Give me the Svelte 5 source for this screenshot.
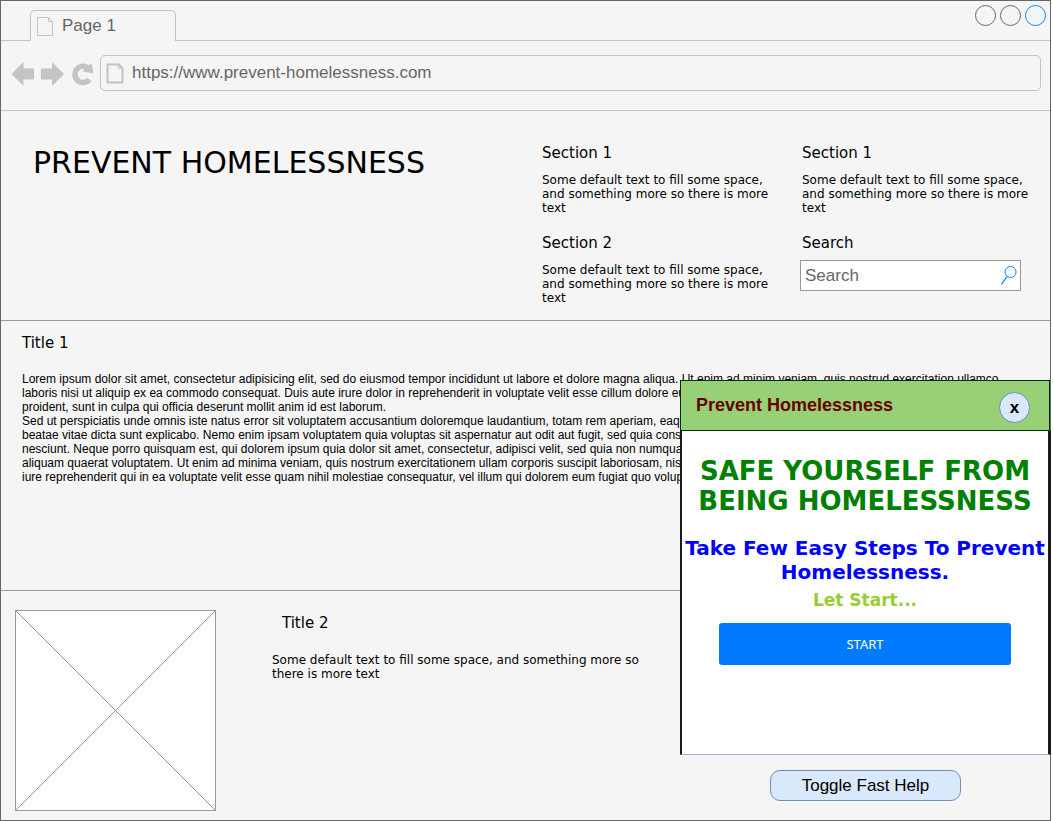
<script>
  let helpOpen = $state(true);
  const blurb = 'Some default text to fill some space, and something more so there is more text';
</script>

{#snippet pageIcon(weight)}
  <svg class="page-icon" viewBox="0 0 18 21" aria-hidden="true">
    <path d="M1.500 1.500H13L16.500 5.500V19.500H1.500Z" fill="none" stroke="#c4c4c4" stroke-width={weight} />
    <path d="M12.500 1.500V5.500H16.500" fill="none" stroke="#c4c4c4" />
  </svg>
{/snippet}

<div class="window">
  <div class="tabs">
    <div class="tab">{@render pageIcon(1)}<span>Page 1</span></div>
    <div class="controls">
      <button aria-label="Minimize"></button>
      <button aria-label="Maximize"></button>
      <button class="close-window" aria-label="Close"></button>
    </div>
  </div>

  <div class="toolbar">
    <button class="nav" aria-label="Back">
      <svg width="24" height="26" viewBox="0 0 24 26"><path d="M0.500 13L12.500 1V7.500H23V18.500H12.500V25Z" fill="#c4c4c4" /></svg>
    </button>
    <button class="nav" aria-label="Forward">
      <svg width="24" height="26" viewBox="0 0 24 26"><path d="M23 13L11 1V7.500H0V18.500H11V25Z" fill="#c4c4c4" /></svg>
    </button>
    <button class="nav" aria-label="Reload">
      <svg width="24" height="26" viewBox="0 0 24 26">
        <path d="M18.500 18.500A8.200 8.200 0 1 1 16.500 6.500" fill="none" stroke="#c4c4c4" stroke-width="5.500" />
        <path d="M20.500 2L22.500 12.500L11.500 10.500Z" fill="#c4c4c4" />
      </svg>
    </button>
    <label class="address">
      {@render pageIcon(2)}
      <input type="text" aria-label="Address" value="https://www.prevent-homelessness.com" />
    </label>
  </div>

  <header>
    <h1>PREVENT HOMELESSNESS</h1>
    <div class="sections">
      <section><h2>Section 1</h2><p>{blurb}</p></section>
      <section><h2>Section 1</h2><p>{blurb}</p></section>
      <section><h2>Section 2</h2><p>{blurb}</p></section>
      <section>
        <h2><label for="search">Search</label></h2>
        <div class="search">
          <input id="search" type="text" placeholder="Search" />
          <svg width="16" height="19" viewBox="0 0 16 19" aria-hidden="true">
            <circle cx="9.500" cy="6" r="5.500" fill="none" stroke="#008cff" />
            <path d="M6 10.500L0.500 18.500" stroke="#008cff" stroke-width="1.300" />
          </svg>
        </div>
      </section>
    </div>
  </header>

  <article class="lorem">
    <h2>Title 1</h2>
    <p>Lorem ipsum dolor sit amet, consectetur adipisicing elit, sed do eiusmod tempor incididunt ut labore et dolore magna aliqua. Ut enim ad minim veniam, quis nostrud exercitation ullamco laboris nisi ut aliquip ex ea commodo consequat. Duis aute irure dolor in reprehenderit in voluptate velit esse cillum dolore eu fugiat nulla pariatur. Excepteur sint occaecat cupidatat non proident, sunt in culpa qui officia deserunt mollit anim id est laborum.</p>
    <p>Sed ut perspiciatis unde omnis iste natus error sit voluptatem accusantium doloremque laudantium, totam rem aperiam, eaque ipsa quae ab illo inventore veritatis et quasi architecto beatae vitae dicta sunt explicabo. Nemo enim ipsam voluptatem quia voluptas sit aspernatur aut odit aut fugit, sed quia consequuntur magni dolores eos qui ratione voluptatem sequi nesciunt. Neque porro quisquam est, qui dolorem ipsum quia dolor sit amet, consectetur, adipisci velit, sed quia non numquam eius modi tempora incidunt ut labore et dolore magnam aliquam quaerat voluptatem. Ut enim ad minima veniam, quis nostrum exercitationem ullam corporis suscipit laboriosam, nisi ut aliquid ex ea commodi consequatur? Quis autem vel eum iure reprehenderit qui in ea voluptate velit esse quam nihil molestiae consequatur, vel illum qui dolorem eum fugiat quo voluptas nulla pariatur?</p>
  </article>

  <article class="media">
    <svg width="201" height="201" viewBox="0 0 201 201" aria-hidden="true">
      <rect x="0.500" y="0.500" width="200" height="200" fill="#fff" stroke="#999" />
      <path d="M0.500 0.500L200.500 200.500M200.500 0.500L0.500 200.500" stroke="#999" />
    </svg>
    <div class="media-text">
      <h2>Title 2</h2>
      <p>{blurb}</p>
    </div>
  </article>

  <aside class="help">
    {#if helpOpen}
      <div class="dialog" role="dialog" aria-labelledby="help-title">
        <div class="dialog-head">
          <strong id="help-title">Prevent Homelessness</strong>
          <button class="dismiss" onclick={() => (helpOpen = false)}>x</button>
        </div>
        <div class="dialog-body">
          <h3>SAFE YOURSELF FROM BEING HOMELESSNESS</h3>
          <h4>Take Few Easy Steps To Prevent Homelessness.</h4>
          <h5>Let Start...</h5>
          <button class="start">START</button>
        </div>
      </div>
    {/if}
    <button class="toggle" onclick={() => (helpOpen = !helpOpen)}>Toggle Fast Help</button>
  </aside>
</div>

<style>
  :global(body) { margin: 0; background: #fff; }
  .window, .window * { box-sizing: border-box; }
  .window {
    position: relative;
    display: flex;
    flex-direction: column;
    min-height: 100vh;
    margin-right: 2px;
    border: 1px solid #666;
    background: #f5f5f5;
    color: #000;
    font: 12px/14px "DejaVu Sans", sans-serif;
  }
  h1, h2, h3, h4, h5, p { margin: 0; font-weight: normal; }
  button { padding: 0; font: inherit; cursor: pointer; }
  input { min-width: 0; border: 0; padding: 0; background: none; outline: 0; font: 17px/20px "Liberation Sans", Arial, sans-serif; color: #666; }
  svg { display: block; flex: none; }

  .tabs {
    display: flex;
    justify-content: space-between;
    align-items: flex-end;
    height: 40px;
    padding-left: 29px;
    border-bottom: 1px solid #c4c4c4;
  }
  .tab {
    display: flex;
    align-items: center;
    gap: 8px;
    width: 146px;
    height: 31px;
    margin-bottom: -1px;
    padding-left: 5px;
    border: 1px solid #c4c4c4;
    border-bottom: 0;
    border-radius: 5px 5px 0 0;
    background: #f5f5f5;
    font: 17px/20px "Liberation Sans", Arial, sans-serif;
    color: #666;
  }
  .page-icon { width: 18px; height: 21px; }
  .controls { display: flex; gap: 4px; align-self: flex-start; padding: 4px 4px 0 0; }
  .controls button { width: 21px; height: 21px; border: 1px solid #666; border-radius: 50%; background: none; }
  .controls .close-window { border-color: #008cff; }

  .toolbar {
    display: flex;
    align-items: center;
    gap: 6px;
    height: 70px;
    padding: 0 9px 5px 10px;
    border-bottom: 1px solid #c4c4c4;
  }
  .nav { border: 0; background: none; }
  .nav svg { margin-top: 2px; }
  .address {
    display: flex;
    flex: 1;
    align-items: center;
    gap: 8px;
    height: 36px;
    margin-left: -1px;
    padding-left: 5px;
    border: 1px solid #c4c4c4;
    border-radius: 5px;
  }
  .address input { flex: 1; }

  header {
    display: flex;
    justify-content: space-between;
    height: 210px;
    padding: 34px 18px 0 32px;
    border-bottom: 1px solid #999;
  }
  h1 { font-size: 30px; line-height: 36px; }
  h2 { font-size: 15px; line-height: 18px; }
  .sections { display: grid; grid-template-columns: 230px 230px; grid-template-rows: 90px 80px; column-gap: 30px; margin-top: -1px; }
  .sections p { margin-top: 11px; }
  .search {
    display: flex;
    align-items: center;
    width: 221px;
    height: 31px;
    margin: 8px 0 0 -2px;
    padding: 0 3px 0 4px;
    border: 1px solid #999;
    background: #fff;
  }
  .search input { flex: 1; }
  .search input::placeholder { color: #666; opacity: 1; }

  .lorem { height: 270px; padding: 13px 38px 0 21px; border-bottom: 1px solid #999; }
  .lorem h2 { margin-bottom: 20px; }
  .lorem p { font-family: "Liberation Sans", Arial, sans-serif; }

  .media { display: flex; gap: 56px; padding: 19px 14px 9px; }
  .media-text { width: 380px; padding-top: 4px; }
  .media-text h2 { margin: 0 0 21px 10px; }

  .help {
    position: absolute;
    top: 379px;
    right: -1px;
    display: flex;
    flex-direction: column;
    align-items: center;
    gap: 15px;
    width: 371px;
  }
  .dialog { width: 100%; }
  .dialog-head {
    display: flex;
    justify-content: space-between;
    align-items: center;
    height: 51px;
    margin-right: 1px;
    padding: 0 19px 2px 15px;
    border: 1px solid #030;
    background: #97d077;
    font: bold 18px/20px "Liberation Sans", Arial, sans-serif;
    color: #600;
  }
  .dismiss { width: 31px; height: 31px; margin-top: 6px; border: 1px solid #6c8ebf; border-radius: 50%; background: #dae8fc; color: #000; font-size: 17px; }
  .dialog-body {
    height: 324px;
    padding: 25px 0 0;
    border: solid #1b1b1f;
    border-width: 0 3px 1px 2px;
    border-bottom-color: #a9a9dc;
    background: #fff;
    text-align: center;
    font-weight: bold;
  }
  h3, h4, h5 { font-weight: bold; }
  h3 { font-size: 26px; line-height: 30px; color: #008000; }
  h4 { margin-top: 20px; font-size: 20px; line-height: 24px; color: #00f; }
  h5 { margin-top: 6px; font-size: 17px; line-height: 20px; color: #9acd32; }
  .start { width: 292px; height: 42px; margin-top: 13px; border: 0; border-radius: 3px; background: #007bff; color: #fff; font: 13px/16px "Noto Sans", sans-serif; }
  .toggle { width: 191px; height: 31px; border: 1px solid #6c8ebf; border-radius: 10px; background: #dae8fc; color: #000; font: 17px/20px "Liberation Sans", Arial, sans-serif; }
</style>
